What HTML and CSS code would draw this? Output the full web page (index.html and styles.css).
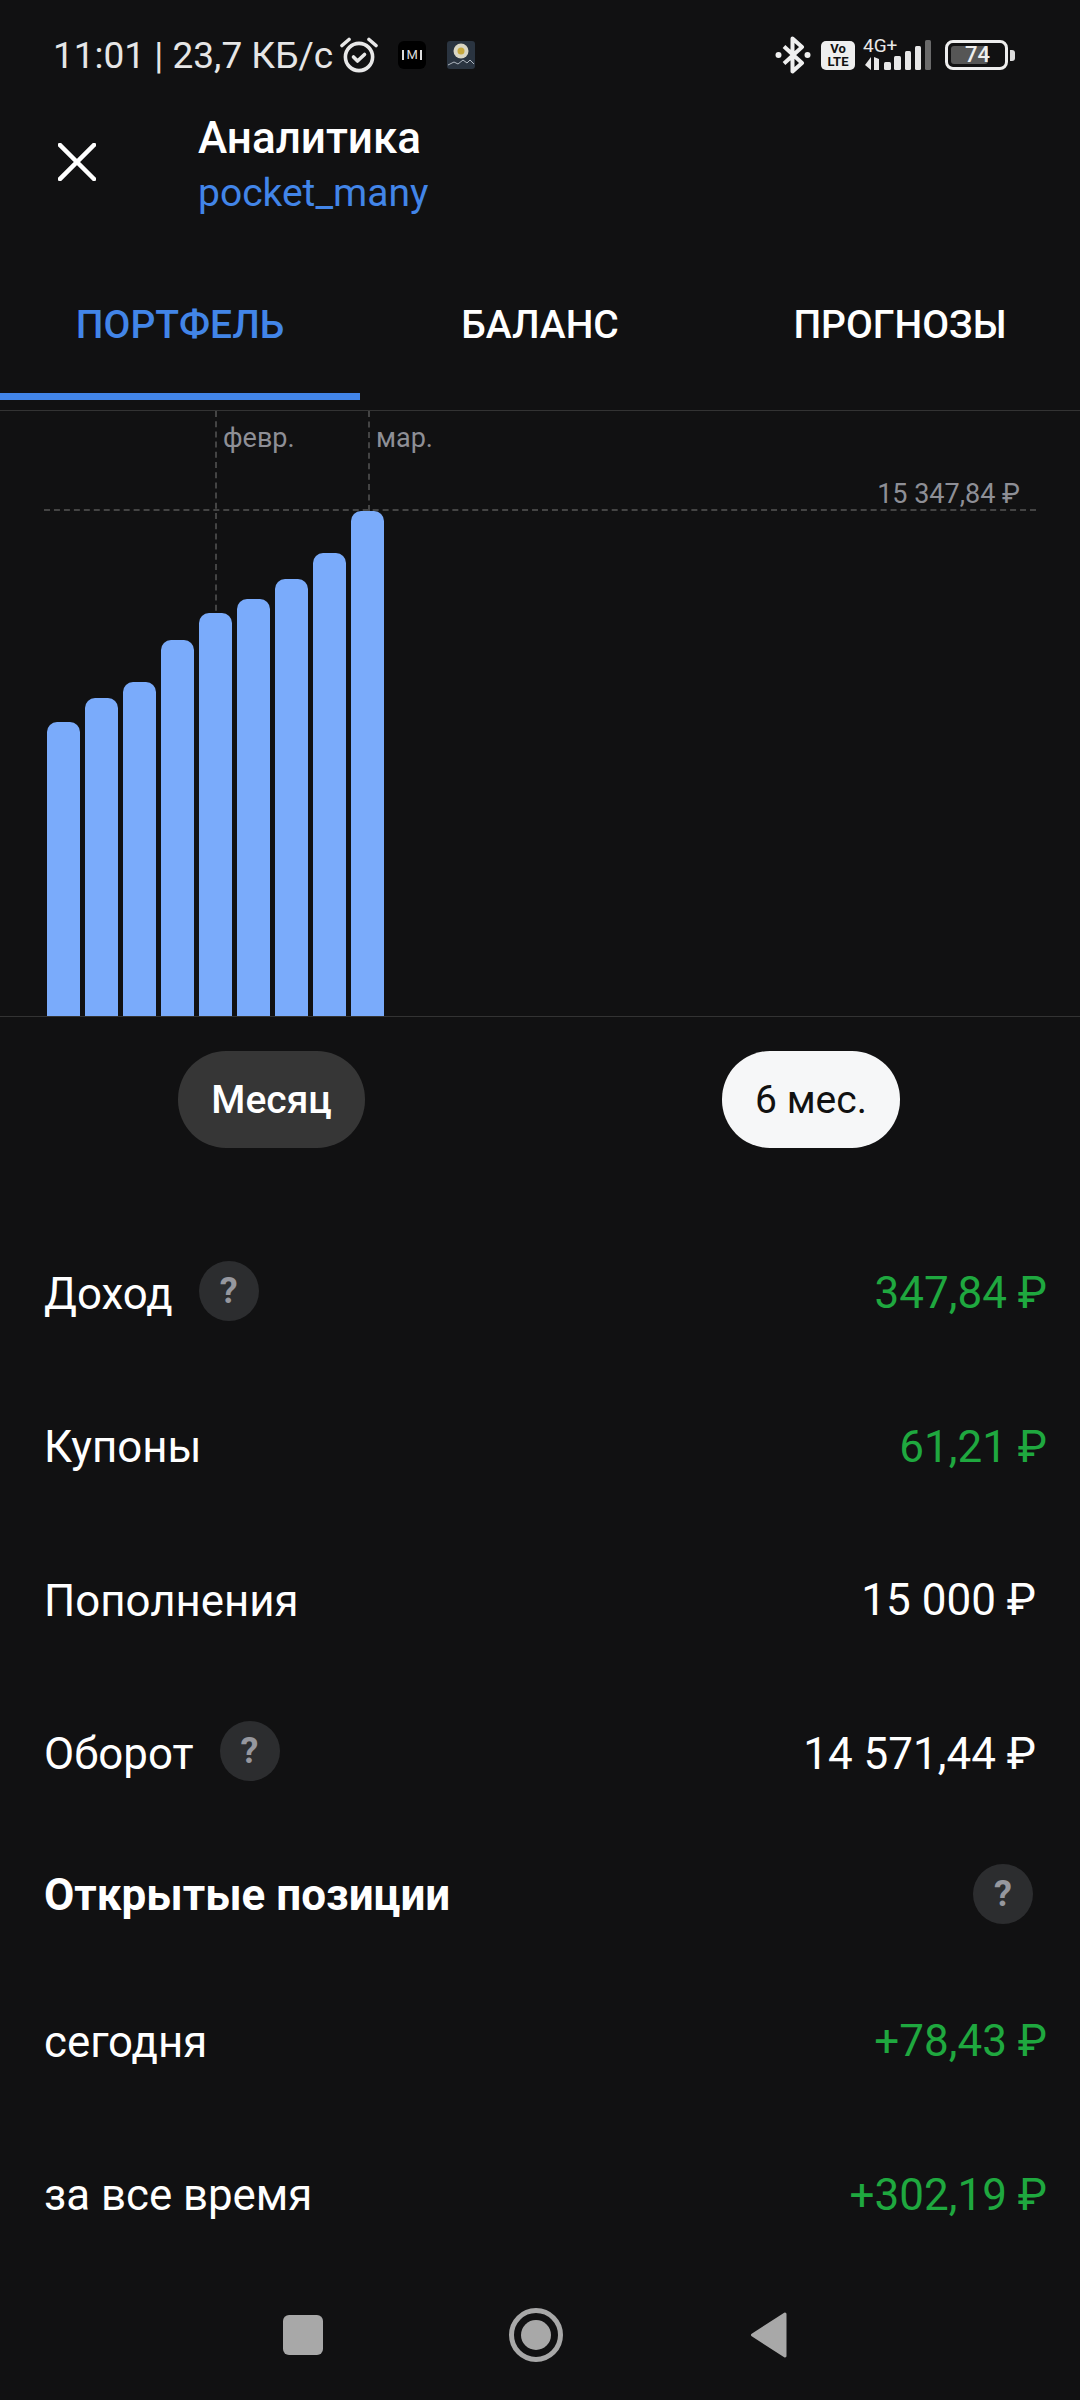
FILE: index.html
```html
<!DOCTYPE html>
<html lang="ru">
<head>
  <meta charset="UTF-8" />
  <title>Аналитика</title>
  <link rel="stylesheet" href="styles.css">
</head>
<body>
  <div class="screen">
    <div class="status-bar">
      <div class="status-left">
        <span class="status-text">11:01 | 23,7 КБ/с</span>
        <svg class="alarm" viewBox="0 0 40 36" fill="none" stroke="#e8e8e8" stroke-width="3.6" stroke-linecap="round" stroke-linejoin="round">
          <circle cx="20" cy="20" r="13.6"/>
          <path d="M14.5 20l4 4 7-6.500"/>
          <path d="M3 8.500L10 2.500M37 8.500L30 2.500"/>
        </svg>
        <span class="app-icon app-music">M</span>
        <svg class="app-icon app-coin" viewBox="0 0 28 28">
          <rect width="28" height="28" rx="3" fill="#2a3440"/>
          <circle cx="14" cy="10" r="7.500" fill="#d9d6c4"/>
          <circle cx="14" cy="10" r="3.500" fill="#c7a93e"/>
          <path d="M1 24l6-3 4 2 5-4 4 3 3-3 4 4" fill="none" stroke="#aeb6bf" stroke-width="1"/>
        </svg>
      </div>
      <div class="status-right">
        <svg class="bluetooth" viewBox="0 0 36 38" fill="none" stroke="#f0f0f0" stroke-width="4" stroke-linejoin="round">
          <path d="M9 10.500L27 27 17.500 35.500V2.500L27 11 9 27.500"/>
          <circle cx="3.500" cy="19" r="3" fill="#f0f0f0" stroke="none"/>
          <circle cx="32.500" cy="19" r="3" fill="#f0f0f0" stroke="none"/>
        </svg>
        <div class="volte"><span>Vo</span><span>LTE</span></div>
        <div class="signal">
          <span class="signal-text">4G+</span>
          <svg class="signal-bars" viewBox="0 0 70 30">
            <path d="M8 17v13l-6-5zM11 17l5 2v11h-5z" fill="#e8e8e8"/>
            <rect x="21" y="22" width="7" height="8" rx="1.500" fill="#e8e8e8"/>
            <rect x="31" y="16" width="7" height="14" rx="1.500" fill="#e8e8e8"/>
            <rect x="42" y="11" width="6" height="19" rx="1.500" fill="#e8e8e8"/>
            <rect x="52" y="6" width="6" height="24" rx="1.500" fill="#e8e8e8"/>
            <rect x="62" y="0" width="6" height="30" rx="1.500" fill="#6a6a6a"/>
          </svg>
        </div>
        <div class="battery">
          <div class="battery-body"><div class="battery-fill"></div><span class="battery-text">74</span></div>
          <div class="battery-nub"></div>
        </div>
      </div>
    </div>

    <div class="top-bar">
      <svg class="close-icon" viewBox="0 0 38 38" stroke="#fff" stroke-width="4.500" stroke-linecap="square">
        <path d="M2 2l34 34M36 2L2 36"/>
      </svg>
      <div class="top-title">
        <div class="title">Аналитика</div>
        <div class="subtitle">pocket_many</div>
      </div>
    </div>

    <div class="tabs">
      <div class="tab active">ПОРТФЕЛЬ</div>
      <div class="tab">БАЛАНС</div>
      <div class="tab">ПРОГНОЗЫ</div>
    </div>

    <div class="chart">
      <div class="grid-v grid-feb"></div>
      <div class="grid-v grid-mar"></div>
      <div class="grid-h"></div>
      <span class="month month-feb">февр.</span>
      <span class="month month-mar">мар.</span>
      <span class="max-label">15 347,84 ₽</span>
      <div class="bars">
        <div class="bar" style="height: 294px"></div>
        <div class="bar" style="height: 318px"></div>
        <div class="bar" style="height: 334px"></div>
        <div class="bar" style="height: 376px"></div>
        <div class="bar" style="height: 403px"></div>
        <div class="bar" style="height: 417px"></div>
        <div class="bar" style="height: 437px"></div>
        <div class="bar" style="height: 463px"></div>
        <div class="bar" style="height: 505px"></div>
      </div>
    </div>

    <div class="periods">
      <div class="pill pill-dark">Месяц</div>
      <div class="pill pill-light">6 мес.</div>
    </div>

    <div class="rows">
      <div class="row">
        <div class="row-label">Доход <span class="help">?</span></div>
        <div class="value green">347,84 ₽</div>
      </div>
      <div class="row">
        <div class="row-label">Купоны</div>
        <div class="value green">61,21 ₽</div>
      </div>
      <div class="row">
        <div class="row-label">Пополнения</div>
        <div class="value">15 000 ₽</div>
      </div>
      <div class="row">
        <div class="row-label">Оборот <span class="help">?</span></div>
        <div class="value">14 571,44 ₽</div>
      </div>
      <div class="row row-heading">
        <div class="row-label">Открытые позиции</div>
        <span class="help">?</span>
      </div>
      <div class="row">
        <div class="row-label">сегодня</div>
        <div class="value green">+78,43 ₽</div>
      </div>
      <div class="row">
        <div class="row-label">за все время</div>
        <div class="value green">+302,19 ₽</div>
      </div>
    </div>

    <div class="nav-bar">
      <div class="nav-square"></div>
      <div class="nav-circle"><div class="nav-dot"></div></div>
      <svg class="nav-back" viewBox="0 0 38 46"><path d="M35 2L2.500 23 35 44z" fill="#a8a8a8" stroke="#a8a8a8" stroke-width="3" stroke-linejoin="round"/></svg>
    </div>
  </div>
</body>
</html>
```

FILE: styles.css
```css
:root {
  --bg: #111112;
  --blue: #4285e8;
  --bar: #7aabfb;
  --green: #1fa83f;
  --gray: #8e8f96;
}

body {
  margin: 0;
  background: var(--bg);
  color: #fff;
  font-family: Roboto, sans-serif;
}
.screen {
  width: 1080px;
  height: 2400px;
  overflow: hidden;
  display: flex;
  flex-direction: column;
}

/* status bar */
.status-bar {
  height: 110px;
  flex: none;
  box-sizing: border-box;
  padding: 0 65px 0 53px;
  display: flex;
  justify-content: space-between;
  align-items: center;
}
.status-left, .status-right {
  display: flex;
  align-items: center;
}
.status-text {
  font-size: 37px;
  line-height: 44px;
  padding-top: 2px;
  color: #e6e6e6;
  white-space: nowrap;
}
.alarm {
  width: 40px;
  height: 36px;
  margin-left: 6px;
}
.app-icon {
  width: 28px;
  height: 28px;
  flex: none;
}
.app-music {
  position: relative;
  margin-left: 19px;
  background: #000;
  border-radius: 6px;
  color: #ddd;
  font-size: 13px;
  line-height: 28px;
  text-align: center;
}
.app-music::before, .app-music::after {
  content: "";
  position: absolute;
  top: 9px;
  width: 2px;
  height: 10px;
  background: #ddd;
}
.app-music::before { left: 4px; }
.app-music::after { right: 4px; }
.app-coin {
  margin-left: 21px;
}
.bluetooth {
  width: 36px;
  height: 38px;
}
.volte {
  width: 34px;
  height: 29px;
  margin-left: 10px;
  background: #eee;
  border-radius: 5px;
  color: #111;
  font-size: 13px;
  font-weight: 700;
  line-height: 13px;
  display: flex;
  flex-direction: column;
  align-items: center;
  justify-content: center;
}
.signal {
  position: relative;
  width: 70px;
  height: 30px;
  margin-left: 8px;
}
.signal-bars {
  display: block;
  width: 70px;
  height: 30px;
}
.signal-text {
  position: absolute;
  left: 0;
  top: -3px;
  font-size: 19px;
  line-height: 18px;
  color: #e8e8e8;
}
.battery {
  margin-left: 12px;
  display: flex;
  align-items: center;
  gap: 2px;
}
.battery-body {
  position: relative;
  box-sizing: border-box;
  width: 63px;
  height: 30px;
  border: 3px solid #eee;
  border-radius: 8px;
  padding: 3px;
}
.battery-fill {
  width: 72%;
  height: 100%;
  background: #565656;
  border-radius: 3px;
}
.battery-text {
  position: absolute;
  left: 17px;
  top: 0;
  font-size: 22px;
  font-weight: 500;
  line-height: 24px;
  color: #eee;
}
.battery-nub {
  width: 5px;
  height: 11px;
  background: #ddd;
  border-radius: 0 3px 3px 0;
}

/* header */
.top-bar {
  height: 110px;
  flex: none;
  display: flex;
  align-items: center;
  padding-left: 58px;
}
.close-icon {
  width: 38px;
  height: 38px;
  margin-top: -7px;
}
.top-title {
  margin-left: 102px;
  padding-top: 3px;
}
.title {
  font-size: 44px;
  font-weight: 500;
  line-height: 52px;
}
.subtitle {
  font-size: 39px;
  line-height: 58px;
  color: var(--blue);
}

/* tabs */
.tabs {
  height: 191px;
  flex: none;
  box-sizing: border-box;
  border-bottom: 1px solid #333;
  display: flex;
}
.tab {
  flex: 1;
  box-sizing: border-box;
  height: 180px;
  padding-top: 37px;
  display: flex;
  align-items: center;
  justify-content: center;
  font-size: 39px;
  font-weight: 500;
  border-bottom: 7px solid transparent;
}
.tab.active {
  color: var(--blue);
  border-bottom-color: var(--blue);
}

/* chart */
.chart {
  position: relative;
  height: 606px;
  flex: none;
  box-sizing: border-box;
  border-bottom: 1px solid #333;
}
.bars {
  position: absolute;
  left: 47px;
  bottom: 0;
  display: flex;
  align-items: flex-end;
  gap: 5.500px;
}
.bar {
  width: 33px;
  margin-right: -0.500px;
  background: var(--bar);
  border-radius: 10px 10px 0 0;
}
.grid-v {
  position: absolute;
  top: 0;
  width: 0;
  height: 210px;
  border-left: 2px dashed #444;
}
.grid-feb { left: 215px; }
.grid-mar { left: 368px; height: 100px; }
.grid-h {
  position: absolute;
  left: 44px;
  top: 98px;
  width: 992px;
  border-top: 2px dashed #444;
}
.month, .max-label {
  position: absolute;
  font-size: 27px;
  line-height: 34px;
  color: var(--gray);
  white-space: nowrap;
}
.month-feb { left: 223px; top: 10px; }
.month-mar { left: 376px; top: 10px; }
.max-label { right: 60px; top: 66px; }

/* period switch */
.periods {
  height: 199px;
  flex: none;
  box-sizing: border-box;
  padding-top: 34px;
  position: relative;
  display: flex;
  align-items: flex-start;
}
.pill {
  height: 97px;
  border-radius: 48px;
  display: flex;
  align-items: center;
  justify-content: center;
  font-size: 39px;
}
.pill-dark {
  width: 187px;
  margin-left: 178px;
  background: #363636;
  font-weight: 500;
}
.pill-light {
  width: 178px;
  margin-left: 357px;
  background: #f6f7f8;
  color: #111;
}

/* rows */
.rows {
  flex: none;
  padding: 0 44px;
}
.row {
  height: 153.500px;
  display: flex;
  align-items: center;
  justify-content: space-between;
  font-size: 43.800px;
}
.row-label {
  display: flex;
  align-items: center;
  gap: 26px;
  padding-top: 2px;
}
.row-label .help {
  margin-top: -6px;
}
.value {
  font-size: 44px;
  padding-top: 1px;
}
.value.green {
  color: var(--green);
  margin-right: -11px;
}
.row-heading {
  height: 128px;
  margin-bottom: 6px;
  font-weight: 700;
  font-size: 44px;
}
.row-heading .help {
  margin-right: 3px;
}
.help {
  width: 60px;
  height: 60px;
  border-radius: 50%;
  background: #2c2d2f;
  color: #96979e;
  font-size: 36px;
  font-weight: 700;
  display: flex;
  align-items: center;
  justify-content: center;
}

/* nav */
.nav-bar {
  position: absolute;
  left: 0;
  top: 2310px;
  width: 1080px;
  height: 50px;
  display: flex;
  align-items: center;
  box-sizing: border-box;
  padding-left: 283px;
}
.nav-square {
  width: 40px;
  height: 40px;
  background: #a8a8a8;
  border-radius: 6px;
}
.nav-circle {
  box-sizing: border-box;
  width: 54px;
  height: 54px;
  margin-left: 186px;
  border: 5px solid #a8a8a8;
  border-radius: 50%;
  display: flex;
  align-items: center;
  justify-content: center;
}
.nav-dot {
  width: 30px;
  height: 30px;
  background: #a8a8a8;
  border-radius: 50%;
}
.nav-back {
  width: 38px;
  height: 46px;
  margin-left: 187px;
}
```
